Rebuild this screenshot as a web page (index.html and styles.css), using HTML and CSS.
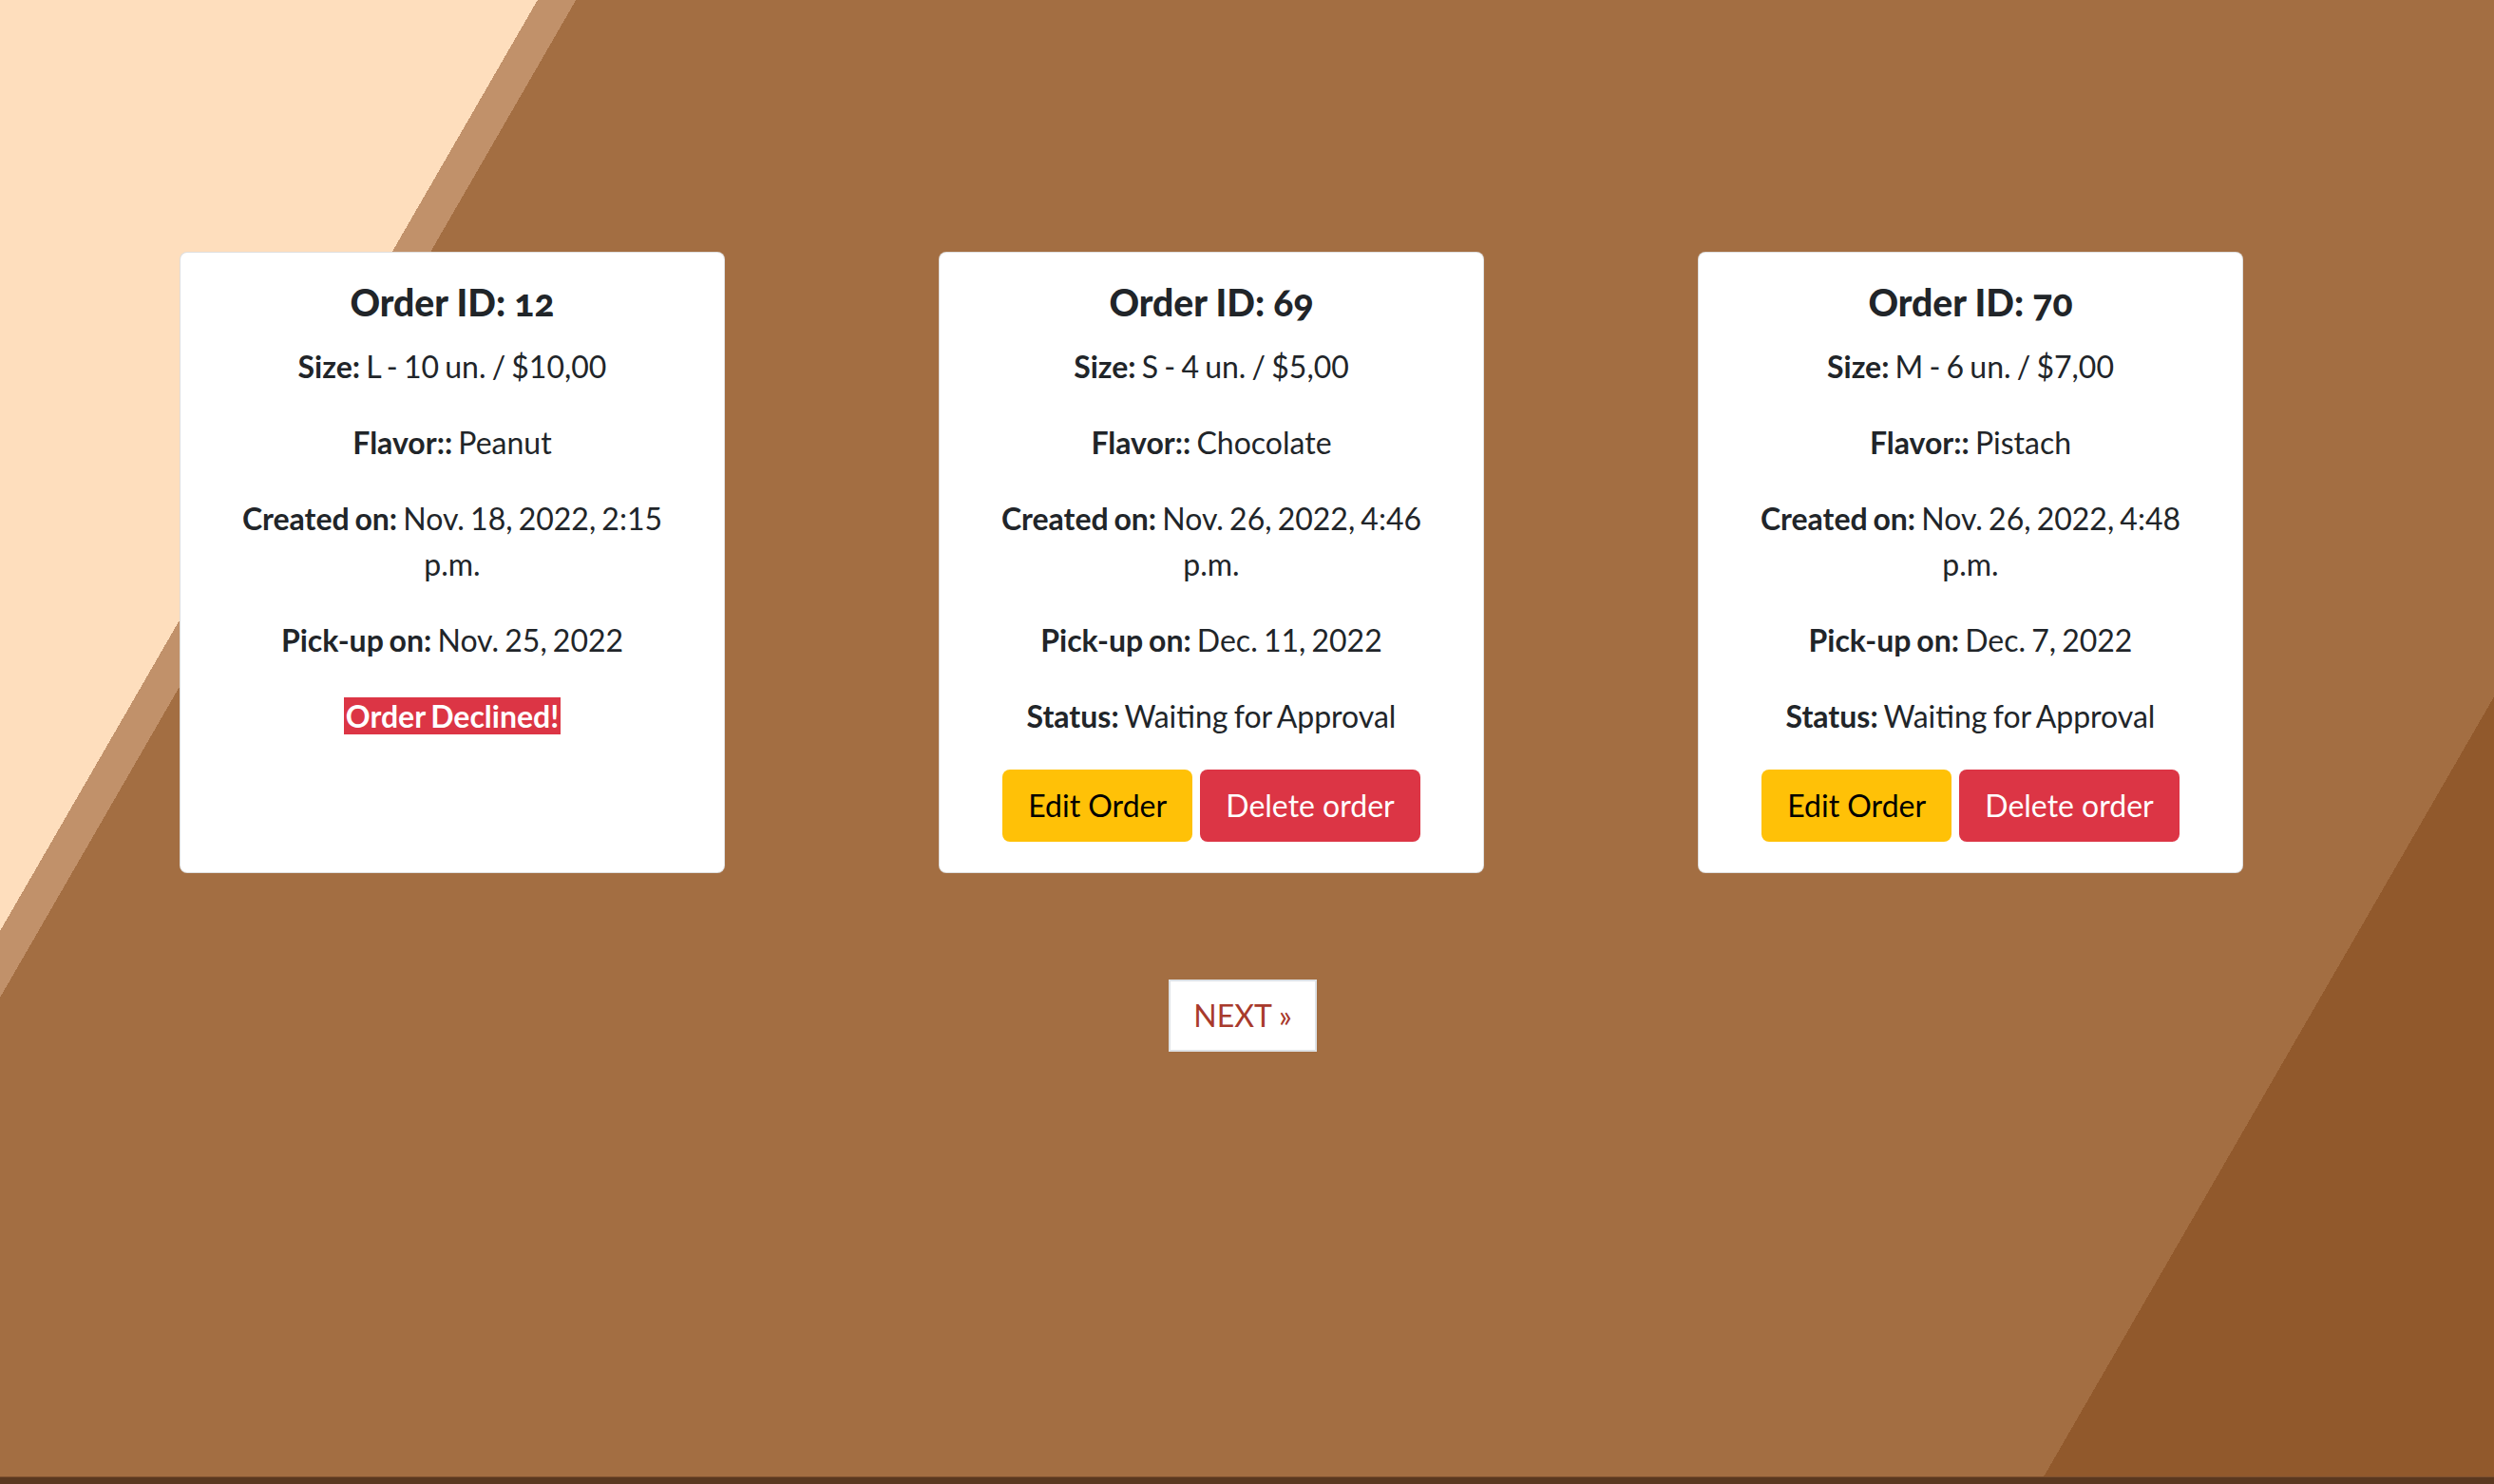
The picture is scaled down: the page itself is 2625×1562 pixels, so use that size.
FILE: index.html
```html
<!DOCTYPE html>
<html lang="en">
<head>
<meta charset="utf-8">
<title>My Orders</title>
<link rel="stylesheet" href="styles.css">
</head>
<body>
<div class="page">
  <main class="orders">
    <div class="cards">
      <div class="card">
        <h5 class="card-title">Order ID: 12</h5>
        <p><strong>Size:</strong> L - 10 un. / $10,00</p>
        <p><strong>Flavor::</strong> Peanut</p>
        <p><strong>Created on:</strong> Nov. 18, 2022, 2:15 p.m.</p>
        <p><strong>Pick-up on:</strong> Nov. 25, 2022</p>
        <p><span class="declined">Order Declined!</span></p>
      </div>
      <div class="card">
        <h5 class="card-title">Order ID: 69</h5>
        <p><strong>Size:</strong> S - 4 un. / $5,00</p>
        <p><strong>Flavor::</strong> Chocolate</p>
        <p><strong>Created on:</strong> Nov. 26, 2022, 4:46 p.m.</p>
        <p><strong>Pick-up on:</strong> Dec. 11, 2022</p>
        <p><strong>Status:</strong> Waiting for Approval</p>
        <div class="actions"><a class="btn btn-warning" href="#">Edit Order</a> <a class="btn btn-danger" href="#">Delete order</a></div>
      </div>
      <div class="card">
        <h5 class="card-title">Order ID: 70</h5>
        <p><strong>Size:</strong> M - 6 un. / $7,00</p>
        <p><strong>Flavor::</strong> Pistach</p>
        <p><strong>Created on:</strong> Nov. 26, 2022, 4:48 p.m.</p>
        <p><strong>Pick-up on:</strong> Dec. 7, 2022</p>
        <p><strong>Status:</strong> Waiting for Approval</p>
        <div class="actions"><a class="btn btn-warning" href="#">Edit Order</a> <a class="btn btn-danger" href="#">Delete order</a></div>
      </div>
    </div>
    <nav class="pager">
      <a class="page-link" href="#">NEXT &raquo;</a>
    </nav>
  </main>
</div>
<footer class="footer"></footer>
</body>
</html>
```

FILE: styles.css
```css
* { box-sizing: border-box; }

html, body {
  margin: 0;
  padding: 0;
}

body {
  font-family: "Lato", "Liberation Sans", sans-serif;
  font-size: 32px;
  line-height: 1.5;
  color: #212529;
  overflow: hidden;
  width: 2625px;
  height: 1562px;
}

.page {
  height: 1554px;
  background: linear-gradient(120deg,
    #fedebd 0, #fedebd 490px,
    #c1916a 490px, #c1916a 525px,
    #a36e42 525px, #a36e42 2640px,
    #91592c 2640px);
}

.orders {
  padding-top: 265px;
}

.cards {
  display: flex;
  align-items: stretch;
  gap: 225px;
  padding-left: 189px;
}

.card {
  width: 574px;
  background: #fff;
  border: 1px solid rgba(0, 0, 0, 0.125);
  border-radius: 8px;
  padding: 29px 38px 32px;
  text-align: center;
}

.card-title {
  font-family: "Lato", sans-serif;
  font-weight: 900;
  font-size: 39px;
  line-height: 1.2;
  margin: 0 0 20px;
  font-variant-numeric: oldstyle-nums;
}

.card p {
  margin: 0 0 32px;
  word-spacing: -2px;
}

.card strong {
  font-weight: 700;
}

.declined {
  background: #dc3545;
  color: #fff;
  font-weight: 700;
  padding: 0 2px;
}

.actions {
  margin-top: 0;
}

.btn {
  display: inline-block;
  padding: 13px 26px;
  border: 1px solid transparent;
  border-radius: 8px;
  font-size: 32px;
  line-height: 1.5;
  text-decoration: none;
}

.btn-warning {
  background: #ffc107;
  color: #000;
}

.btn-danger {
  background: #dc3545;
  color: #fff;
}

.pager {
  display: flex;
  justify-content: center;
  padding-top: 112px;
  padding-right: 9px;
}

.page-link {
  display: block;
  background: #fff;
  border: 2px solid #dee2e6;
  padding: 12px 24px;
  color: #a83a2c;
  text-decoration: none;
  font-size: 32px;
  line-height: 1.5;
}

.footer {
  height: 8px;
  background: #5a3820;
  border-top: 1px solid #7e5230;
}
```
